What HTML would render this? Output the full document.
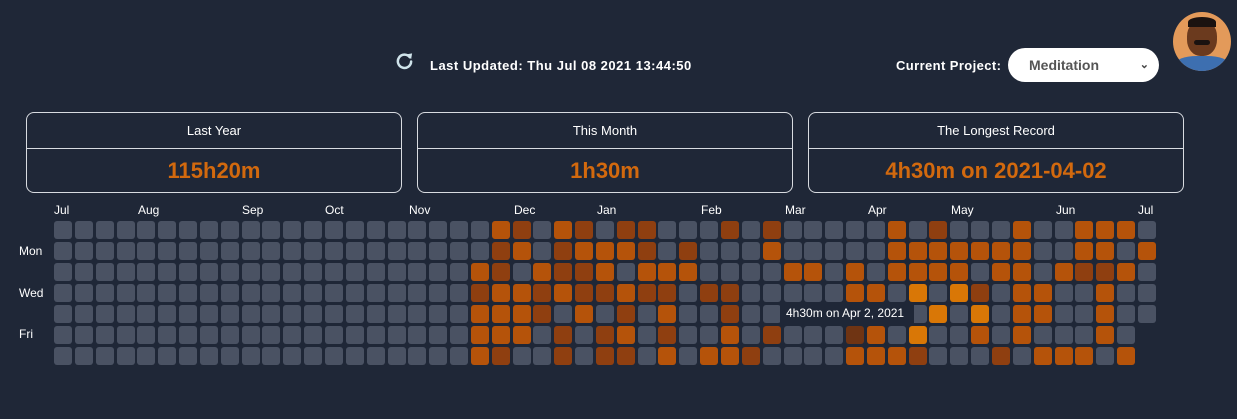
<!DOCTYPE html>
<html><head><meta charset="utf-8"><style>
*{margin:0;padding:0;box-sizing:border-box}
body{width:1237px;height:419px;background:#1f2737;font-family:"Liberation Sans",sans-serif;color:#fff;position:relative;overflow:hidden}
.abs{position:absolute}
.b{font-weight:bold;font-size:13px;letter-spacing:0.5px}
.card{position:absolute;top:112px;width:376px;height:81px;border:1px solid #d8dbe0;border-radius:8px}
.card .t{height:36px;border-bottom:1px solid #d8dbe0;text-align:center;font-size:13px;line-height:36px}
.card .v{text-align:center;font-size:22px;font-weight:bold;color:#d2690e;line-height:44px}
#grid{position:absolute;left:54px;top:221px;display:grid;grid-template-rows:repeat(7,18px);grid-auto-columns:18px;grid-auto-flow:column;row-gap:3px;column-gap:2.85px}
#grid i{display:block;border-radius:3px;background:#4a5263}
#grid i.o{background:#b5530a}#grid i.d{background:#8f3f10}#grid i.b{background:#d97706}#grid i.x{background:#6f3413}
.m{position:absolute;top:203px;font-size:12px}
.dl{position:absolute;left:19px;font-size:12px}
</style></head><body>
<svg class="abs" style="left:395px;top:51px" width="19" height="19" viewBox="0 0 20 20"><path d="M15.5 6.5A7 7 0 1 0 17 11" fill="none" stroke="#cfe3ea" stroke-width="2.6" stroke-linecap="round"/><path d="M12 3.5L18 2.5L17 8.5Z" fill="#cfe3ea"/></svg>
<div class="abs b" style="left:430px;top:58px">Last Updated: Thu Jul 08 2021 13:44:50</div>
<div class="abs b" style="left:896px;top:58px;letter-spacing:0.4px">Current Project:</div>
<div class="abs" style="left:1008px;top:48px;width:151px;height:34px;background:#fff;border-radius:17px;color:#555;font-weight:bold;font-size:14px;line-height:34px;padding-left:21px">Meditation<span style="position:absolute;right:10px;top:0;font-size:11px;color:#444">&#8964;</span></div>
<div class="abs" style="left:1173px;top:12px;width:58px;height:59px;border-radius:50%;overflow:hidden;background:#e39a5a">
<div class="abs" style="left:14px;top:8px;width:30px;height:36px;border-radius:45%;background:#6b3a1e"></div>
<div class="abs" style="left:15px;top:5px;width:28px;height:10px;border-radius:50% 50% 0 0;background:#1a1210"></div>
<div class="abs" style="left:21px;top:28px;width:16px;height:5px;background:#1a1210;border-radius:3px"></div>
<div class="abs" style="left:2px;top:44px;width:54px;height:20px;border-radius:40% 40% 0 0;background:#3d6fb0"></div>
</div>
<div class="card" style="left:26px"><div class="t">Last Year</div><div class="v">115h20m</div></div>
<div class="card" style="left:417px"><div class="t">This Month</div><div class="v">1h30m</div></div>
<div class="card" style="left:808px"><div class="t">The Longest Record</div><div class="v">4h30m on 2021-04-02</div></div>
<div class="m" style="left:54px">Jul</div><div class="m" style="left:138px">Aug</div><div class="m" style="left:242px">Sep</div><div class="m" style="left:325px">Oct</div><div class="m" style="left:409px">Nov</div><div class="m" style="left:514px">Dec</div><div class="m" style="left:597px">Jan</div><div class="m" style="left:701px">Feb</div><div class="m" style="left:785px">Mar</div><div class="m" style="left:868px">Apr</div><div class="m" style="left:951px">May</div><div class="m" style="left:1056px">Jun</div><div class="m" style="left:1138px">Jul</div>
<div class="dl" style="top:244px">Mon</div><div class="dl" style="top:286px">Wed</div><div class="dl" style="top:327px">Fri</div>
<div id="grid"></div>
<div class="abs" style="left:780px;top:303px;width:134px;height:21px;background:#1f2737;font-size:12px;line-height:21px;padding-left:6px">4h30m on Apr 2, 2021</div>
<script>
var cols=[];for(var i=0;i<20;i++)cols.push("GGGGGGG");
cols=cols.concat(["GGODOOO","ODDOOOD","DOGOOOG","GGODDGG","ODDOGDD","DODDOGG","GOODGDD","DOGODOD","DDODGGG","GGODODO","GDOGGGG","GGGDGGO","DGGDDOO","GGGGGGD","DOGGGDG","GGOGGGG","GGOGGGG","GGGGGGG","GGOOGXO","GGGOGOO","OOOGGGO","GOOBGBD","DOOGBGG","GOOBGGG","GOGDBOG","GOOGGGD","OOOOOOG","GGGOOGO","GGOGGGO","OODGGGO","OODOOOG","OGOGGGO","GOGGG"]);
var h="";cols.forEach(function(c){for(var k=0;k<c.length;k++){var ch=c[k];h+='<i class="'+(ch=="G"?"":ch.toLowerCase())+'"></i>';}});
document.getElementById("grid").innerHTML=h;
</script>
</body></html>
